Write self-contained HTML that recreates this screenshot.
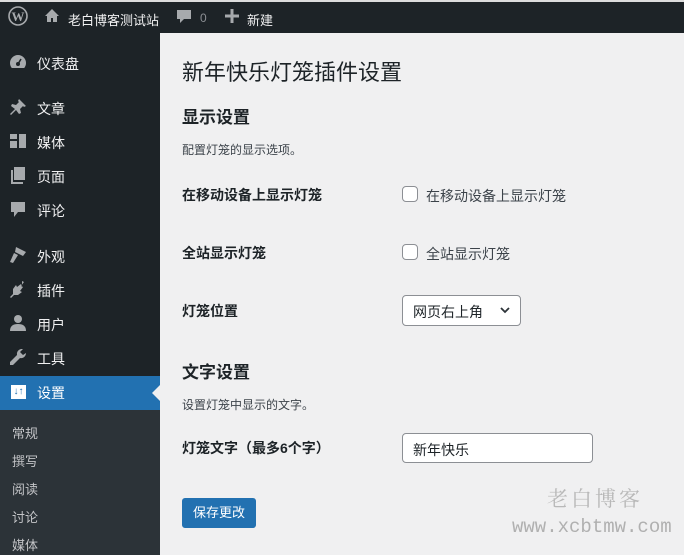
<!DOCTYPE html>
<html><head><meta charset="utf-8"><style>
*{margin:0;padding:0;box-sizing:border-box}
body{width:684px;height:555px;overflow:hidden;background:#f0f0f1;font-family:"Liberation Sans","Noto Sans CJK SC",sans-serif;position:relative;color:#1d2327}
.a{position:absolute;white-space:nowrap}
#bar{position:absolute;left:0;top:0;width:684px;height:33px;background:#1d2327;border-top:2px solid #ddd}
#side{position:absolute;left:0;top:33px;width:160px;height:522px;background:#1d2327}
#sub{position:absolute;left:0;top:410px;width:160px;height:145px;background:#2c3338}
.m{position:absolute;left:37px;color:#f0f0f1;font-size:14px}
.i{position:absolute;left:9px}
.s{position:absolute;left:12px;color:#c3c4c7;font-size:13px}
.lbl{position:absolute;left:182px;font-size:14px;font-weight:bold}
.cb{position:absolute;left:402px;width:16px;height:16px;border:1px solid #8c8f94;border-radius:4px;background:#fff}
</style></head><body>
<div id="bar"></div>
<svg class="a" style="left:8px;top:6px" width="20" height="20" viewBox="0 0 20 20"><circle cx="10" cy="10" r="9" fill="none" stroke="#a7aaad" stroke-width="1.6"/><text x="10" y="15" text-anchor="middle" font-size="13" font-family="Liberation Serif" font-weight="bold" fill="#a7aaad">W</text></svg>
<svg class="a" style="left:44px;top:8px" width="16" height="15" viewBox="0 0 16 15"><path d="M8 1L1 8h2v6h4v-4h2v4h4V8h2z" fill="#a7aaad"/></svg>
<div class="a" style="left:68px;top:10px;color:#f0f0f1;font-size:13px">老白博客测试站</div>
<svg class="a" style="left:176px;top:9px" width="16" height="16" viewBox="0 0 16 16"><path d="M1 1h14v9H8l-4 4v-4H1z" fill="#a7aaad"/></svg>
<div class="a" style="left:200px;top:11px;color:#8c8f94;font-size:12px">0</div>
<svg class="a" style="left:225px;top:9px" width="14" height="14" viewBox="0 0 14 14"><path d="M5.5 0h3v5.5H14v3H8.5V14h-3V8.5H0v-3h5.5z" fill="#a7aaad"/></svg>
<div class="a" style="left:247px;top:10px;color:#f0f0f1;font-size:13px">新建</div>
<div id="side"></div>
<div id="sub"></div>
<div class="a" style="left:0;top:376px;width:160px;height:34px;background:#2271b1"></div>
<div class="a" style="left:152px;top:385px;width:0;height:0;border-top:8px solid transparent;border-bottom:8px solid transparent;border-right:8px solid #f0f0f1"></div>
<svg class="i" style="top:54px" width="18" height="16" viewBox="0 0 18 16"><path d="M9 1a8 8 0 0 0-8 8c0 2 .7 3.7 1.8 5h12.4A8 8 0 0 0 17 9a8 8 0 0 0-8-8z" fill="#a7aaad"/><circle cx="9" cy="10" r="2" fill="#1d2327"/><path d="M9 10l3-5" stroke="#1d2327" stroke-width="1.5"/></svg>
<div class="m" style="top:54px">仪表盘</div>
<svg class="i" style="top:98px" width="18" height="18" viewBox="0 0 18 18"><path d="M10 1l7 7-2 1-1-1-3 3 1 4-2 1-3-4-5 5-1-1 5-5-4-3 1-2 4 1 3-3-1-1z" fill="#a7aaad"/></svg>
<div class="m" style="top:99px">文章</div>
<svg class="i" style="top:132px" width="18" height="18" viewBox="0 0 18 18"><path d="M1 2h7v5H1zM10 2h7v14h-7zM1 9h7v7H1z" fill="#a7aaad"/></svg>
<div class="m" style="top:133px">媒体</div>
<svg class="i" style="top:166px" width="18" height="18" viewBox="0 0 18 18"><path d="M5 1h11v13H5z" fill="#a7aaad"/><path d="M2 4h2v12h10v2H2z" fill="#a7aaad"/></svg>
<div class="m" style="top:167px">页面</div>
<svg class="i" style="top:201px" width="18" height="18" viewBox="0 0 18 18"><path d="M2 1h14v10H9l-4 5v-5H2z" fill="#a7aaad"/></svg>
<div class="m" style="top:201px">评论</div>
<svg class="i" style="top:246px" width="18" height="18" viewBox="0 0 18 18"><path d="M7 1l10 5-3 4-8-4zM5 7l4 2-5 8-3-1z" fill="#a7aaad"/></svg>
<div class="m" style="top:247px">外观</div>
<svg class="i" style="top:280px" width="18" height="18" viewBox="0 0 18 18"><path d="M13 1l2 1-3 4 2 1-3 4 2 1-4 3H5l-3 3-1-1 3-3V9l3-4 1 2 4-3 1 2z" fill="#a7aaad"/></svg>
<div class="m" style="top:281px">插件</div>
<svg class="i" style="top:314px" width="18" height="18" viewBox="0 0 18 18"><circle cx="9" cy="5" r="4" fill="#a7aaad"/><path d="M1 17c0-5 3-7 8-7s8 2 8 7z" fill="#a7aaad"/></svg>
<div class="m" style="top:315px">用户</div>
<svg class="i" style="top:348px" width="18" height="18" viewBox="0 0 18 18"><path d="M12 1a5 5 0 0 0-4 6L1 14v3h3l7-7a5 5 0 0 0 6-5l-3 2-3-3 3-3z" fill="#a7aaad"/></svg>
<div class="m" style="top:349px">工具</div>
<div class="a" style="left:11px;top:385px;width:15px;height:14px;background:#fff;color:#2271b1;font-size:10px;font-weight:bold;text-align:center;line-height:14px">↓↑</div><div class="m" style="top:383px;color:#fff">设置</div>
<div class="s" style="top:423px">常规</div>
<div class="s" style="top:451px">撰写</div>
<div class="s" style="top:479px">阅读</div>
<div class="s" style="top:507px">讨论</div>
<div class="s" style="top:535px">媒体</div>
<div class="a" style="left:182px;top:55px;font-size:22px;color:#1d2327">新年快乐灯笼插件设置</div>
<div class="a" style="left:182px;top:103px;font-size:17px;font-weight:bold">显示设置</div>
<div class="a" style="left:182px;top:141px;font-size:12px;color:#3c434a">配置灯笼的显示选项。</div>
<div class="lbl" style="top:185px">在移动设备上显示灯笼</div>
<div class="cb" style="top:186px"></div><div class="a" style="left:426px;top:186px;font-size:14px;color:#3c434a">在移动设备上显示灯笼</div>
<div class="lbl" style="top:243px">全站显示灯笼</div>
<div class="cb" style="top:244px"></div><div class="a" style="left:426px;top:244px;font-size:14px;color:#3c434a">全站显示灯笼</div>
<div class="lbl" style="top:301px">灯笼位置</div>
<div class="a" style="left:402px;top:295px;width:119px;height:31px;border:1px solid #8c8f94;border-radius:4px;background:#fff;font-size:14px;padding:6px 0 0 10px">网页右上角</div>
<svg class="a" style="left:499px;top:305px" width="12" height="10" viewBox="0 0 12 10"><path d="M2 3l4 4 4-4" fill="none" stroke="#2c3338" stroke-width="1.8"/></svg>
<div class="a" style="left:182px;top:358px;font-size:17px;font-weight:bold">文字设置</div>
<div class="a" style="left:182px;top:396px;font-size:12px;color:#3c434a">设置灯笼中显示的文字。</div>
<div class="lbl" style="top:438px">灯笼文字（最多6个字）</div>
<div class="a" style="left:402px;top:433px;width:191px;height:30px;border:1px solid #8c8f94;border-radius:4px;background:#fff;font-size:14px;padding:6px 0 0 10px">新年快乐</div>
<div class="a" style="left:182px;top:498px;width:74px;height:30px;background:#2271b1;border-radius:3px;color:#fff;font-size:13px;text-align:center;line-height:30px">保存更改</div>
<div class="a" style="left:547px;top:483px;font-size:21px;color:#b8b8b8;font-family:'Noto Serif CJK SC',serif;letter-spacing:3px">老白博客</div>
<div class="a" style="left:512px;top:516px;font-size:19px;color:#b0b0b0;font-family:'Liberation Mono',monospace">www.xcbtmw.com</div>
</body></html>
